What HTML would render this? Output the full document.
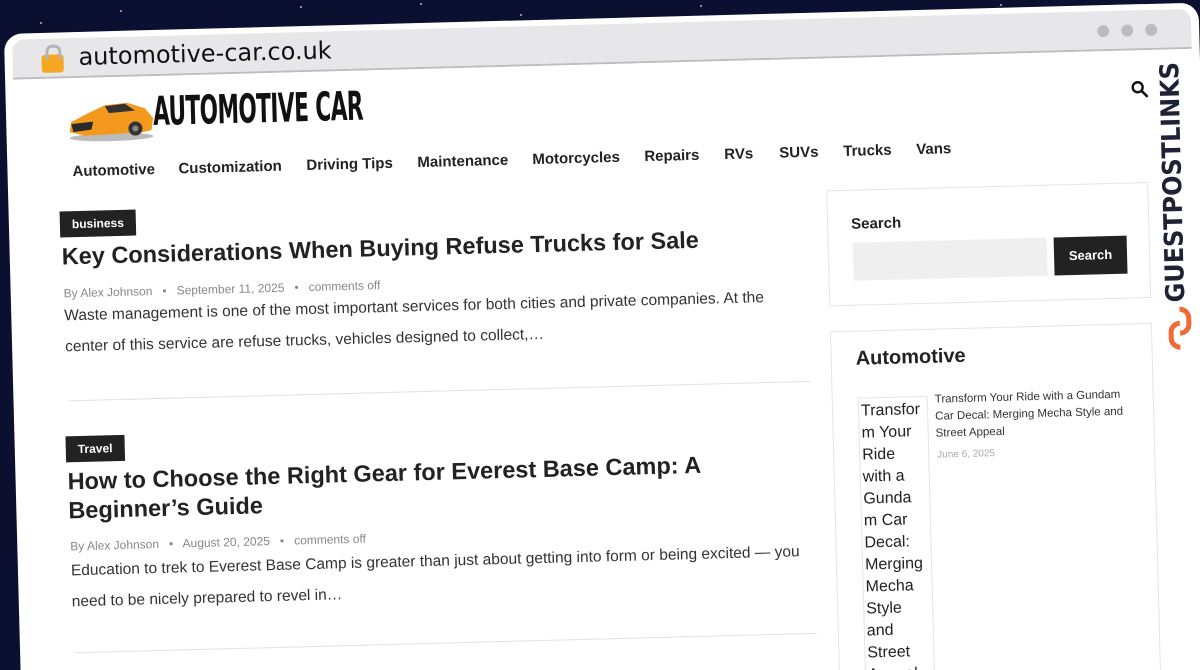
<!DOCTYPE html>
<html><head><meta charset="utf-8"><style>
*{margin:0;padding:0;box-sizing:border-box}
html,body{width:1200px;height:670px;overflow:hidden}
body{background:#0b1030;font-family:"Liberation Sans",sans-serif;position:relative}
.star{position:absolute;width:2px;height:2px;background:#fff;border-radius:50%;opacity:.7}
#w{position:absolute;left:0;top:0;width:1200px;height:720px;transform-origin:0 0;transform:rotate(-1.5deg)}
.frame{position:absolute;left:3px;top:34px;width:1195px;height:700px;background:#fff;border-radius:18px}
.bar{position:absolute;left:8px;top:6px;right:8px;height:40px;background:#e7e7e9;border-radius:12px 12px 0 0;border-bottom:2px solid #bdbdc0}
.lock{position:absolute;left:29px;top:16px;width:22px;height:18px;background:#f5a623;border-radius:3px}
.lock:before{content:"";position:absolute;left:4px;top:-10px;width:10px;height:12px;border:3px solid #b5b5b8;border-bottom:none;border-radius:7px 7px 0 0}
.url{position:absolute;left:66px;top:5px;font-size:24px;color:#111;font-family:"DejaVu Sans","Liberation Sans",sans-serif}
.dot{position:absolute;top:14px;width:12px;height:12px;border-radius:50%;background:#bcbcbf}
.a{position:absolute;color:#222;white-space:nowrap}
.nav{font-size:15px;font-weight:bold;top:165px}
.tag{background:#222;color:#fff;font-size:12px;font-weight:bold;padding:6px 12px;}
h2{font-size:23.5px;font-weight:bold;color:#222;line-height:29px}
.meta{font-size:12px;color:#888}
.ex{font-size:15.5px;color:#333;line-height:31px}
.box{position:absolute;border:1px solid #e4e4e4;background:#fff}
.alt{font-size:16px;color:#222;line-height:22px;white-space:normal;overflow-wrap:anywhere;width:60px}
</style></head><body>
<div class="star" style="left:120px;top:10px"></div><div class="star" style="left:300px;top:6px"></div><div class="star" style="left:520px;top:14px"></div><div class="star" style="left:700px;top:5px"></div><div class="star" style="left:860px;top:12px"></div><div class="star" style="left:40px;top:22px"></div><div class="star" style="left:1000px;top:4px"></div><div class="star" style="left:420px;top:3px"></div>
<div class="star" style="left:1196px;top:200px"></div><div class="star" style="left:1194px;top:480px"></div>
<div id="w">
<div class="frame">
 <div class="bar"><div class="lock"></div><div class="url">automotive-car.co.uk</div>
 <div class="dot" style="right:82px"></div><div class="dot" style="right:58px"></div><div class="dot" style="right:34px"></div></div>
</div>
<svg class="a" style="left:62px;top:94px" width="92" height="52" viewBox="0 0 92 52">
 <ellipse cx="46" cy="46" rx="42" ry="4" fill="#bbb"/>
 <path d="M4 40 L6 30 L22 22 L40 14 L62 12 L80 18 L88 28 L86 40 L76 42 L20 44 Z" fill="#f39a1e"/>
 <path d="M40 15 L60 13 L70 20 L44 22 Z" fill="#333"/>
 <path d="M6 32 L28 30 L26 38 L8 40 Z" fill="#2a2a2a"/>
 <circle cx="70" cy="38" r="7" fill="#333"/><circle cx="70" cy="38" r="3" fill="#888"/>
</svg>
<div class="a" style="left:150px;top:93px;font-size:40px;font-weight:bold;color:#111;letter-spacing:-1px;transform:scaleX(.54);transform-origin:0 0;font-family:'DejaVu Sans',sans-serif">AUTOMOTIVE CAR</div>
<svg class="a" style="left:1128px;top:110px" width="18" height="18" viewBox="0 0 18 18"><circle cx="7" cy="7" r="5" fill="none" stroke="#111" stroke-width="2.4"/><path d="M11 11 L16 16" stroke="#111" stroke-width="2.6" stroke-linecap="round"/></svg>
<div class="a nav" style="left:68px">Automotive</div>
<div class="a nav" style="left:174px">Customization</div>
<div class="a nav" style="left:302px">Driving Tips</div>
<div class="a nav" style="left:413px">Maintenance</div>
<div class="a nav" style="left:528px">Motorcycles</div>
<div class="a nav" style="left:640px">Repairs</div>
<div class="a nav" style="left:720px">RVs</div>
<div class="a nav" style="left:775px">SUVs</div>
<div class="a nav" style="left:839px">Trucks</div>
<div class="a nav" style="left:912px">Vans</div>
<div class="a tag" style="left:54px;top:213px">business</div>
<h2 class="a" style="left:55px;top:244px">Key Considerations When Buying Refuse Trucks for Sale</h2>
<div class="a meta" style="left:56px;top:288px">By Alex Johnson &nbsp;&nbsp;•&nbsp;&nbsp; September 11, 2025 &nbsp;&nbsp;•&nbsp;&nbsp; comments off</div>
<div class="a ex" style="left:56px;top:302px">Waste management is one of the most important services for both cities and private companies. At the<br>center of this service are refuse trucks, vehicles designed to collect,…</div>
<div class="a" style="left:58px;top:402px;width:742px;height:1px;background:#e2e2e2"></div>
<div class="a tag" style="left:54px;top:438px">Travel</div>
<h2 class="a" style="left:55px;top:469px">How to Choose the Right Gear for Everest Base Camp: A<br>Beginner’s Guide</h2>
<div class="a meta" style="left:56px;top:541px">By Alex Johnson &nbsp;&nbsp;•&nbsp;&nbsp; August 20, 2025 &nbsp;&nbsp;•&nbsp;&nbsp; comments off</div>
<div class="a ex" style="left:56px;top:557px">Education to trek to Everest Base Camp is greater than just about getting into form or being excited — you<br>need to be nicely prepared to revel in…</div>
<div class="a" style="left:58px;top:654px;width:742px;height:1px;background:#e2e2e2"></div>
<div class="box" style="left:821px;top:212px;width:322px;height:116px"></div>
<div class="a" style="left:845px;top:238px;font-size:15px;font-weight:bold">Search</div>
<div class="a" style="left:846px;top:265px;width:194px;height:38px;background:#efefef"></div>
<div class="a" style="left:1047px;top:265px;width:73px;height:38px;background:#222;color:#fff;font-size:13px;font-weight:bold;text-align:center;line-height:38px">Search</div>
<div class="box" style="left:821px;top:353px;width:322px;height:400px"></div>
<div class="a" style="left:846px;top:370px;font-size:20px;font-weight:bold">Automotive</div>
<div class="a" style="left:847px;top:420px;width:70px;height:300px;border:1px solid #e4e4e4;overflow:hidden;white-space:normal"><div class="alt" style="padding:2px 2px;box-sizing:content-box">Transform Your Ride with a Gundam Car Decal: Merging Mecha Style and Street Appeal</div></div>
<div class="a" style="left:924px;top:416px;width:190px;white-space:normal;font-size:11.5px;line-height:17px;color:#333">Transform Your Ride with a Gundam Car Decal: Merging Mecha Style and Street Appeal</div>
<div class="a" style="left:925px;top:474px;font-size:10px;color:#aaa">June 6, 2025</div>
<div class="a" style="left:1153px;top:333px;transform:rotate(-90deg);transform-origin:0 0;font-size:26px;font-weight:900;color:#1e2235;font-family:'DejaVu Sans',sans-serif"><span style="display:inline-block;transform:scaleX(.92);transform-origin:0 0">GUESTPOSTLINKS</span></div>
<svg class="a" style="left:1158px;top:336px" width="26" height="46" viewBox="0 0 26 46"><path d="M13 4 a9 9 0 0 1 9 9 v6 a9 9 0 0 1 -9 9" fill="none" stroke="#f06a35" stroke-width="5"/><path d="M13 42 a9 9 0 0 1 -9 -9 v-6 a9 9 0 0 1 9 -9" fill="none" stroke="#f06a35" stroke-width="5"/></svg>
</div>
</body></html>
